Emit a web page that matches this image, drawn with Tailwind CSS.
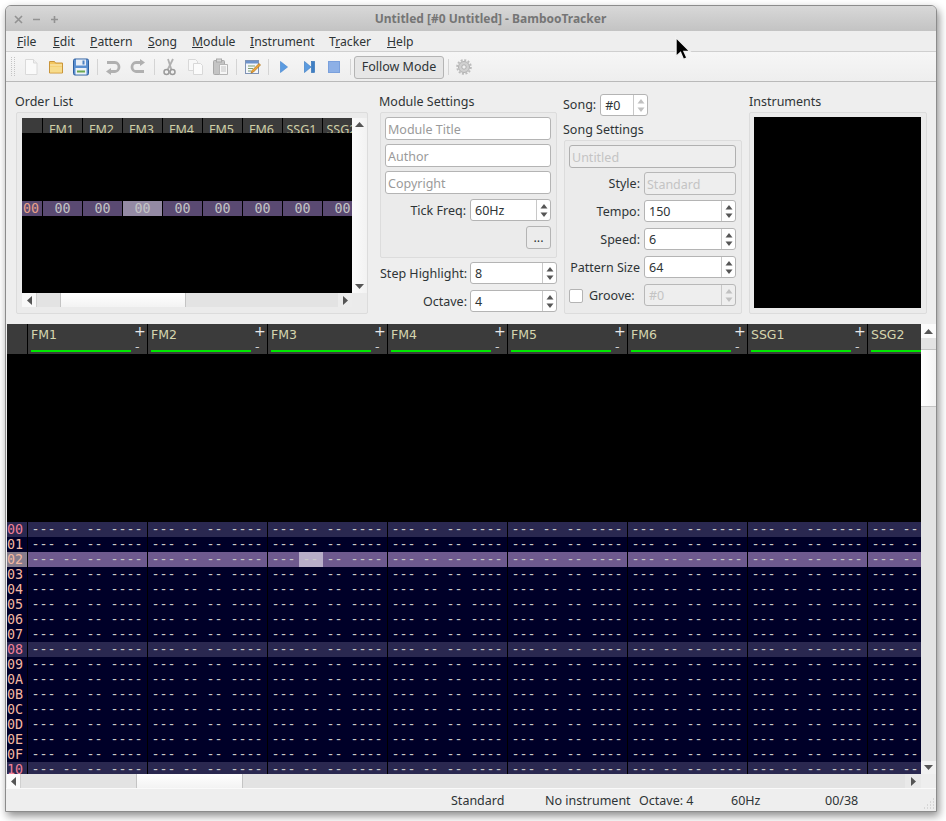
<!DOCTYPE html>
<html lang="en">
<head>
<meta charset="UTF-8" />
<title>BambooTracker</title>
<script src="https://cdn.jsdelivr.net/npm/@tailwindcss/browser@4"></script>
</head>
<body class="bg-white overflow-hidden">
  <div class="relative w-[946px] h-[821px] pt-[5px] pl-[5px] font-['Noto_Sans',sans-serif] text-[12.5px] text-[#2e3436]">
    <!-- Window -->
    <div class="w-[932px] h-[807px] flex flex-col bg-[#eeeeee] border border-[#8c8c8c] rounded-t-[6px] shadow-[2px_4px_9px_rgba(0,0,0,0.45)] overflow-hidden">

      <!-- Title bar -->
      <div class="relative h-[25px] shrink-0 flex items-center justify-center bg-gradient-to-b from-[#d8d8d8] to-[#c3c3c3]">
        <div class="absolute left-[8px] top-[8px] flex gap-[9px]">
          <svg width="9" height="11" viewBox="0 0 9 11"><path d="M1 2l7 7M8 2l-7 7" stroke="#929292" stroke-width="1.6"/></svg>
          <svg width="9" height="11" viewBox="0 0 9 11"><path d="M1 5.500h7" stroke="#929292" stroke-width="1.6"/></svg>
          <svg width="9" height="11" viewBox="0 0 9 11"><path d="M1 5.500h7M4.500 2v7" stroke="#929292" stroke-width="1.6"/></svg>
        </div>
        <span class="ml-[39px] font-bold text-[12px] text-[#757575]">Untitled [#0 Untitled] - BambooTracker</span>
      </div>

      <!-- Menu -->
      <div class="h-[21px] shrink-0 flex items-center pl-[11px] pt-[2px] bg-[#eeeeee] border-b border-[#cfcfcf] text-[12.2px]">
        <span class="w-[36px]"><u>F</u>ile</span>
        <span class="w-[37px]"><u>E</u>dit</span>
        <span class="w-[58px]"><u>P</u>attern</span>
        <span class="w-[44px]"><u>S</u>ong</span>
        <span class="w-[58px]"><u>M</u>odule</span>
        <span class="w-[79px]"><u>I</u>nstrument</span>
        <span class="w-[58px]">T<u>r</u>acker</span>
        <span><u>H</u>elp</span>
      </div>

      <!-- Toolbar -->
      <div class="relative h-[30px] shrink-0 flex items-center bg-gradient-to-b from-[#f6f6f6] to-[#eeeeee] border-b border-[#b9b9b9]">
        <svg class="ml-[5px]" width="5" height="22" viewBox="0 0 5 22"><path d="M0.500 1v20M3.500 1v20" stroke="#c4c4c4" stroke-dasharray="1 1"/></svg>
        <!-- new -->
        <svg class="ml-[7px]" width="16" height="18" viewBox="0 0 16 18"><path d="M2.500 1.500h8l3.500 3.500v11.500h-11.500z" fill="#fafafa" stroke="#dadada"/><path d="M10.500 1.500v3.500h3.500" fill="#efefef" stroke="#dadada"/></svg>
        <!-- open -->
        <svg class="ml-[9px]" width="16" height="16" viewBox="0 0 16 16"><path d="M1.500 2.500h5l1 1.500h7v10h-13z" fill="#f3c65f" stroke="#c9953a"/><path d="M2 7.500h12v6h-12z" fill="#f7dc8c"/><path d="M2 6h12" stroke="#fdf2c8"/></svg>
        <!-- save -->
        <svg class="ml-[8px]" width="18" height="18" viewBox="0 0 18 18"><rect x="1.500" y="1" width="15" height="16" rx="1.500" fill="#5a8fd0" stroke="#2f5f9e"/><rect x="4" y="1.500" width="10" height="6" fill="#e8eef6"/><rect x="10.500" y="2.500" width="2" height="4" fill="#4d82c4"/><rect x="3.500" y="10" width="11" height="6.500" fill="#eef2f6"/><path d="M5 13.500h8" stroke="#6aa84f" stroke-width="2"/></svg>
        <div class="ml-[7px] w-px h-[16px] bg-[#d4d4d4]"></div>
        <!-- undo -->
        <svg class="ml-[7px]" width="16" height="16" viewBox="0 0 16 16"><path d="M2 3.500h8a4 4.500 0 0 1 0 9h-5" fill="none" stroke="#b0b0b0" stroke-width="2.800"/><path d="M6 9l-5 3.500 5 3.500z" fill="#b0b0b0"/></svg>
        <!-- redo -->
        <svg class="ml-[9px]" width="16" height="16" viewBox="0 0 16 16"><path d="M11 3.500h-5a4 4.500 0 0 0 0 9h8" fill="none" stroke="#b0b0b0" stroke-width="2.800"/><path d="M10 0l5 3.500-5 3.500z" fill="#b0b0b0"/></svg>
        <div class="ml-[8px] w-px h-[16px] bg-[#d4d4d4]"></div>
        <!-- cut -->
        <svg class="ml-[7px]" width="14" height="18" viewBox="0 0 14 18"><path d="M11 1l-5.500 11M6 1l3.500 11" stroke="#b0b0b0" stroke-width="1.800" fill="none"/><circle cx="4.500" cy="14" r="2.500" fill="none" stroke="#9a9a9a" stroke-width="1.500"/><circle cx="10.500" cy="14" r="2.500" fill="none" stroke="#9a9a9a" stroke-width="1.500"/></svg>
        <!-- copy -->
        <svg class="ml-[11px]" width="17" height="18" viewBox="0 0 17 18"><path d="M1.500 1.500h7l2 2v9h-9z" fill="#f8f8f8" stroke="#d8d8d8"/><path d="M6.500 5.500h7l2 2v9h-9z" fill="#fbfbfb" stroke="#d8d8d8"/></svg>
        <!-- paste -->
        <svg class="ml-[8px]" width="17" height="18" viewBox="0 0 17 18"><rect x="1.500" y="2.500" width="11" height="14" rx="1" fill="#c4c4c4" stroke="#a8a8a8"/><rect x="4.500" y="1" width="5" height="3" fill="#d8d8d8" stroke="#a8a8a8"/><path d="M7.500 6.500h8v10h-8z" fill="#f6f6f6" stroke="#b5b5b5"/><path d="M9 9h5M9 11h5M9 13h5" stroke="#c4c4c4"/></svg>
        <div class="ml-[7px] w-px h-[16px] bg-[#d4d4d4]"></div>
        <!-- edit -->
        <svg class="ml-[8px]" width="16" height="16" viewBox="0 0 16 16"><rect x="0.500" y="1.500" width="13" height="13" fill="#f4f6fb" stroke="#7f93b5"/><rect x="1" y="2" width="12" height="2.500" fill="#6d93cc"/><path d="M3 7h7M3 9.500h5M3 12h3" stroke="#7da070"/><path d="M14 4.500l1.500 1.500-7 7-2.500 1 1-2.500z" fill="#eea63a" stroke="#a96d16" stroke-width="0.700"/></svg>
        <div class="ml-[7px] w-px h-[16px] bg-[#d4d4d4]"></div>
        <!-- play -->
        <svg class="ml-[11px]" width="8" height="12" viewBox="0 0 8 12"><path d="M0.500 0.500l7 5.500-7 5.500z" fill="#5b9be0" stroke="#4a8ad2" stroke-width="0.700"/></svg>
        <!-- step -->
        <svg class="ml-[16px]" width="11" height="12" viewBox="0 0 11 12"><path d="M0.500 0.500l6.500 5.500-6.500 5.500z" fill="#5b9be0" stroke="#3f7fc4" stroke-width="0.700"/><rect x="7.500" y="0.500" width="3" height="11" fill="#3f7fc4" stroke="#3674b8" stroke-width="0.700"/></svg>
        <!-- stop -->
        <svg class="ml-[13px]" width="12" height="12" viewBox="0 0 12 12"><rect x="0.500" y="0.500" width="11" height="11" fill="#8db0e6" stroke="#7aa0dc"/></svg>
        <div class="ml-[10px] w-px h-[16px] bg-[#d4d4d4]"></div>
        <button class="ml-[3px] mt-[2px] w-[90px] h-[23px] rounded-[3px] border border-[#b4b4b4] bg-[#e6e6e6] text-[12.5px] text-[#2e3436]">Follow Mode</button>
        <div class="ml-[4px] w-px h-[16px] bg-[#d4d4d4]"></div>
        <!-- gear -->
        <svg class="ml-[7px]" width="16" height="16" viewBox="0 0 16 16"><circle cx="8" cy="8" r="5.500" fill="#d0d0d0" stroke="#b0b0b0"/><circle cx="8" cy="8" r="6.800" fill="none" stroke="#bcbcbc" stroke-width="2" stroke-dasharray="2 1.560"/><circle cx="8" cy="8" r="2.200" fill="#f0f0f0" stroke="#b0b0b0"/></svg>
      </div>

      <!-- Top panels -->
      <div class="h-[242px] shrink-0 flex pl-[10px]">
        <!-- Order list -->
        <div class="w-[352px] shrink-0">
          <div class="h-[30px] pt-[11px] leading-[17px] -ml-px">Order List</div>
          <div class="w-[352px] h-[202px] border border-[#dcdcdc] bg-[#ebebeb] rounded-[2px] pt-[5px] pl-[5px]">
            <div class="flex">
              <div class="w-[330px] h-[175px] bg-black overflow-hidden flex flex-col">
                <div id="order-head" class="h-[15px] shrink-0 flex overflow-hidden"></div>
                <div id="order-row" class="mt-[68px] h-[15px] shrink-0 flex font-['DejaVu_Sans_Mono',monospace] text-[13.33px] leading-[16px]"></div>
              </div>
              <div class="w-[15px] h-[175px] flex flex-col justify-between items-center bg-gradient-to-r from-[#fbfbfb] to-[#f2f2f2] py-[4px]">
                <svg width="9" height="5" viewBox="0 0 9 5"><path d="M4.500 0l4.500 5h-9z" fill="#555"/></svg>
                <svg width="9" height="5" viewBox="0 0 9 5"><path d="M4.500 5l4.500-5h-9z" fill="#555"/></svg>
              </div>
            </div>
            <div class="flex h-[14px]">
              <div class="w-[15px] bg-[#f8f8f8] flex items-center justify-center border-r border-[#d0d0d0]"><svg width="5" height="9" viewBox="0 0 5 9"><path d="M0 4.500l5-4.500v9z" fill="#555"/></svg></div>
              <div class="w-[23px] bg-[#e3e3e3]"></div>
              <div class="w-[126px] bg-gradient-to-b from-[#ffffff] to-[#f3f3f3] border-x border-[#c4c4c4]"></div>
              <div class="w-[152px] bg-[#e3e3e3]"></div>
              <div class="w-[14px] bg-[#ececec] flex items-center justify-center"><svg width="5" height="9" viewBox="0 0 5 9"><path d="M5 4.500l-5-4.500v9z" fill="#555"/></svg></div>
            </div>
          </div>
        </div>

        <!-- Module settings -->
        <div class="w-[178px] shrink-0 ml-[12px]">
          <div class="h-[30px] pt-[11px] leading-[17px] -ml-px">Module Settings</div>
          <div class="w-[177px] h-[146px] border border-[#dcdcdc] bg-[#ebebeb] rounded-[2px] pt-[4px] pl-[4px] flex flex-col gap-[4px]">
            <div class="w-[166px] h-[23px] shrink-0 bg-white border border-[#b4b4b4] rounded-[3px] pl-[2px] leading-[24px] text-[#9a9a9a]">Module Title</div>
            <div class="w-[166px] h-[23px] shrink-0 bg-white border border-[#b4b4b4] rounded-[3px] pl-[2px] leading-[24px] text-[#9a9a9a]">Author</div>
            <div class="w-[166px] h-[23px] shrink-0 bg-white border border-[#b4b4b4] rounded-[3px] pl-[2px] leading-[24px] text-[#9a9a9a]">Copyright</div>
            <div class="flex items-start h-[22px] mt-px">
              <span class="w-[81px] text-right leading-[24px]">Tick Freq:</span>
              <div class="spin ml-[4px] w-[81px]" data-v="60Hz"></div>
            </div>
            <button class="self-end mr-[5px] mt-px w-[25px] h-[23px] bg-[#ececec] border border-[#b4b4b4] rounded-[3px] text-[12.5px] leading-[18px]">...</button>
          </div>
          <div class="mt-[4px] flex items-start h-[22px]">
            <span class="w-[87px] text-right leading-[24px]">Step Highlight:</span>
            <div class="spin ml-[3px] w-[87px]" data-v="8"></div>
          </div>
          <div class="mt-[6px] flex items-start h-[22px]">
            <span class="w-[87px] text-right leading-[24px]">Octave:</span>
            <div class="spin ml-[3px] w-[87px]" data-v="4"></div>
          </div>
        </div>

        <!-- Song settings -->
        <div class="w-[179px] shrink-0 ml-[6px]">
          <div class="h-[35px] pt-[12px] flex items-start -ml-px">
            <span class="leading-[22px]">Song:</span>
            <div class="spin off-arrows ml-[4px] w-[48px]" data-v="#0"></div>
          </div>
          <div class="h-[23px] pt-[4px] leading-[17px] -ml-px">Song Settings</div>
          <div class="w-[178px] h-[174px] border border-[#dcdcdc] bg-[#ebebeb] rounded-[2px] pt-[4px] pl-[4px] flex flex-col gap-[4px]">
            <div class="w-[167px] h-[23px] shrink-0 bg-[#eeeeee] border border-[#b0b0b0] rounded-[3px] pl-[2px] leading-[24px] text-[#c4c4c4]">Untitled</div>
            <div class="flex items-start h-[23px] shrink-0">
              <span class="w-[71px] text-right leading-[24px]">Style:</span>
              <div class="ml-[4px] w-[92px] h-[23px] bg-[#eeeeee] border border-[#b8b8b8] rounded-[3px] pl-[2px] leading-[24px] text-[#c4c4c4]">Standard</div>
            </div>
            <div class="flex items-start h-[22px] shrink-0 mt-px">
              <span class="w-[71px] text-right leading-[24px]">Tempo:</span>
              <div class="spin ml-[4px] w-[92px]" data-v="150"></div>
            </div>
            <div class="flex items-start h-[22px] shrink-0 mt-[2px]">
              <span class="w-[71px] text-right leading-[24px]">Speed:</span>
              <div class="spin ml-[4px] w-[92px]" data-v="6"></div>
            </div>
            <div class="flex items-start h-[22px] shrink-0 mt-[2px]">
              <span class="w-[71px] text-right leading-[24px]">Pattern Size</span>
              <div class="spin ml-[4px] w-[92px]" data-v="64"></div>
            </div>
            <div class="flex items-start h-[22px] shrink-0 mt-[2px]">
              <span class="mt-[5px] w-[14px] h-[14px] bg-white border border-[#b4b4b4] rounded-[2px]"></span>
              <span class="ml-[6px] w-[51px] leading-[24px]">Groove:</span>
              <div class="spin off ml-[4px] w-[92px]" data-v="#0"></div>
            </div>
          </div>
        </div>

        <!-- Instruments -->
        <div class="w-[178px] shrink-0 ml-[6px]">
          <div class="h-[30px] pt-[11px] leading-[17px]">Instruments</div>
          <div class="w-[178px] h-[202px] border border-[#dcdcdc] bg-[#ebebeb] rounded-[2px] pt-[4px] pl-[4px]">
            <div class="w-[167px] h-[191px] bg-black"></div>
          </div>
        </div>
      </div>

      <!-- Pattern editor -->
      <div class="h-[464px] shrink-0 flex flex-col pl-px">
        <div class="flex h-[450px]">
          <div class="w-[914px] h-[450px] bg-black overflow-hidden flex flex-col">
            <div id="pat-head" class="h-[30px] shrink-0 flex"></div>
            <div id="pat-rows" class="mt-[168px] flex flex-col font-['DejaVu_Sans_Mono',monospace] text-[13.33px] leading-[16px]"></div>
          </div>
          <div class="w-[15px] h-[450px] flex flex-col bg-[#e3e3e3]">
            <div class="h-[14px] bg-[#fbfbfb] flex items-center justify-center"><svg width="9" height="5" viewBox="0 0 9 5"><path d="M4.500 0l4.500 5h-9z" fill="#555"/></svg></div>
            <div class="h-[11px]"></div>
            <div class="h-[58px] bg-gradient-to-r from-[#ffffff] to-[#f3f3f3] border-y border-[#c4c4c4]"></div>
            <div class="grow"></div>
            <div class="h-[13px] bg-[#f2f2f2] flex items-center justify-center"><svg width="9" height="5" viewBox="0 0 9 5"><path d="M4.500 5l4.500-5h-9z" fill="#555"/></svg></div>
          </div>
        </div>
        <div class="flex h-[14px]">
          <div class="w-[14px] bg-[#fbfbfb] flex items-center justify-center border-r border-[#d0d0d0]"><svg width="5" height="9" viewBox="0 0 5 9"><path d="M0 4.500l5-4.500v9z" fill="#555"/></svg></div>
          <div class="w-[115px] bg-[#e3e3e3]"></div>
          <div class="w-[107px] bg-gradient-to-b from-[#ffffff] to-[#f3f3f3] border-x border-[#c4c4c4]"></div>
          <div class="w-[662px] bg-[#e3e3e3]"></div>
          <div class="w-[16px] bg-[#e9e9e9] flex items-center justify-center"><svg width="5" height="9" viewBox="0 0 5 9"><path d="M5 4.500l-5-4.500v9z" fill="#555"/></svg></div>
        </div>
      </div>

      <!-- Status bar -->
      <div class="relative grow border-t border-[#fafafa] flex items-center pt-[2px]">
        <span class="ml-[445px] w-[94px]">Standard</span>
        <span class="w-[94px]">No instrument</span>
        <span class="w-[92px]">Octave: 4</span>
        <span class="w-[94px]">60Hz</span>
        <span>00/38</span>
        <svg class="absolute right-[1px] bottom-[1px]" width="12" height="12" viewBox="0 0 12 12"><path d="M10 1h1M7 4h1M10 4h1M4 7h1M7 7h1M10 7h1M1 10h1M4 10h1M7 10h1M10 10h1" stroke="#c0c0c0"/></svg>
      </div>
    </div>

    <!-- Mouse cursor over window -->
    <svg class="absolute left-[673px] top-[36px]" width="20" height="26" viewBox="0 0 20 26"><path d="M3 1.500v19l4.500-4 3 7 3.500-1.500-3-6.500h6z" fill="#000" stroke="#f2f2f2" stroke-width="1.400"/></svg>
  </div>

  <script>
    const channels = ['FM1', 'FM2', 'FM3', 'FM4', 'FM5', 'FM6', 'SSG1', 'SSG2'];

    // Order list
    document.getElementById('order-head').innerHTML =
      '<div class="w-[20px] mr-px shrink-0 bg-[#3b3b3b]"></div>' +
      channels.map(c => `<div class="w-[39px] mr-px shrink-0 bg-[#3b3b3b] text-center text-[12.5px] text-[#cfcfa6] leading-[15px] pt-[4px] pr-[2px] whitespace-nowrap">${c}</div>`).join('');
    document.getElementById('order-row').innerHTML =
      '<div class="w-[20px] mr-px shrink-0 bg-[#5a4a72] text-[#e8a088] text-center pr-[2px]">00</div>' +
      channels.map((c, i) => `<div class="w-[39px] mr-px shrink-0 text-center ${i === 2 ? 'bg-[#948aa4] text-[#c4c4c4]' : 'bg-[#5a4a72] text-[#c4c4c4]'}">00</div>`).join('');

    // Pattern header
    document.getElementById('pat-head').innerHTML =
      '<div class="w-[20px] mr-px shrink-0 bg-[#3b3b3b]"></div>' +
      channels.map(c => `<div class="relative w-[119px] mr-px shrink-0 bg-[#3b3b3b] font-['DejaVu_Sans',sans-serif] text-[12.5px] text-[#d6d6ae]">
        <span class="absolute left-[3px] top-[2px]">${c}</span>
        <span class="absolute left-[106px] top-[-1px] text-[14px] text-[#e8e8e8] leading-[17px]">+</span>
        <span class="absolute left-[107px] top-[14px] text-[#d0d0d0] leading-[17px]">-</span>
        <div class="absolute left-[3px] top-[26px] w-[100px] h-[2px] bg-[#00e600]"></div>
      </div>`).join('');

    // Pattern rows
    const cellWidths = ['w-[31px]', 'w-[24px]', 'w-[24px]', 'w-[40px]'];
    const cellTexts = ['---', '--', '--', '----'];
    const hex = n => n.toString(16).toUpperCase().padStart(2, '0');
    let rows = '';
    for (let r = 0; r <= 16; r++) {
      const isCursor = r === 2;
      const isHl = r % 8 === 0;
      const bg = isCursor ? 'bg-[#6e5a8e]' : isHl ? 'bg-[#2a2850]' : 'bg-[#000028]';
      const numBg = isCursor ? 'bg-[#857c8c]' : isHl ? 'bg-[#2a2850]' : 'bg-[#000028]';
      const numText = isHl ? 'text-[#f08098]' : 'text-[#f4b8a0]';
      let row = `<div class="flex h-[15px] shrink-0"><div class="w-[20px] mr-px shrink-0 ${numBg} ${numText}">${hex(r)}</div>`;
      channels.forEach((c, ci) => {
        row += `<div class="w-[119px] mr-px shrink-0 flex ${bg} text-[#c8c8c8]">`;
        cellTexts.forEach((t, ti) => {
          const cur = isCursor && ci === 2 && ti === 1 ? 'bg-[#b8aec8]' : '';
          row += `<span class="${cellWidths[ti]} pl-[3.500px] ${cur}">${t}</span>`;
        });
        row += '</div>';
      });
      rows += row + '</div>';
    }
    document.getElementById('pat-rows').innerHTML = rows;

    // Spin boxes
    document.querySelectorAll('.spin').forEach(el => {
      const off = el.classList.contains('off');
      const dim = off || el.classList.contains('off-arrows');
      const arrow = dim ? '#c0c0c0' : '#555555';
      el.className += off
        ? ' h-[22px] flex bg-[#eeeeee] border border-[#b8b8b8] rounded-[3px] text-[#c4c4c4]'
        : ' h-[22px] flex bg-white border border-[#b4b4b4] rounded-[3px]';
      el.innerHTML = `<span class="grow pl-[4px] leading-[22px]">${el.dataset.v}</span>
        <span class="w-[14px] flex flex-col items-center justify-center gap-[3px] border-l border-[#c8c8c8]">
          <svg width="8" height="5" viewBox="0 0 8 5"><path d="M4 0l3.500 4.500h-7z" fill="${arrow}"/></svg>
          <svg width="8" height="5" viewBox="0 0 8 5"><path d="M4 5l3.500-4.500h-7z" fill="${arrow}"/></svg>
        </span>`;
    });
  </script>
</body>
</html>
